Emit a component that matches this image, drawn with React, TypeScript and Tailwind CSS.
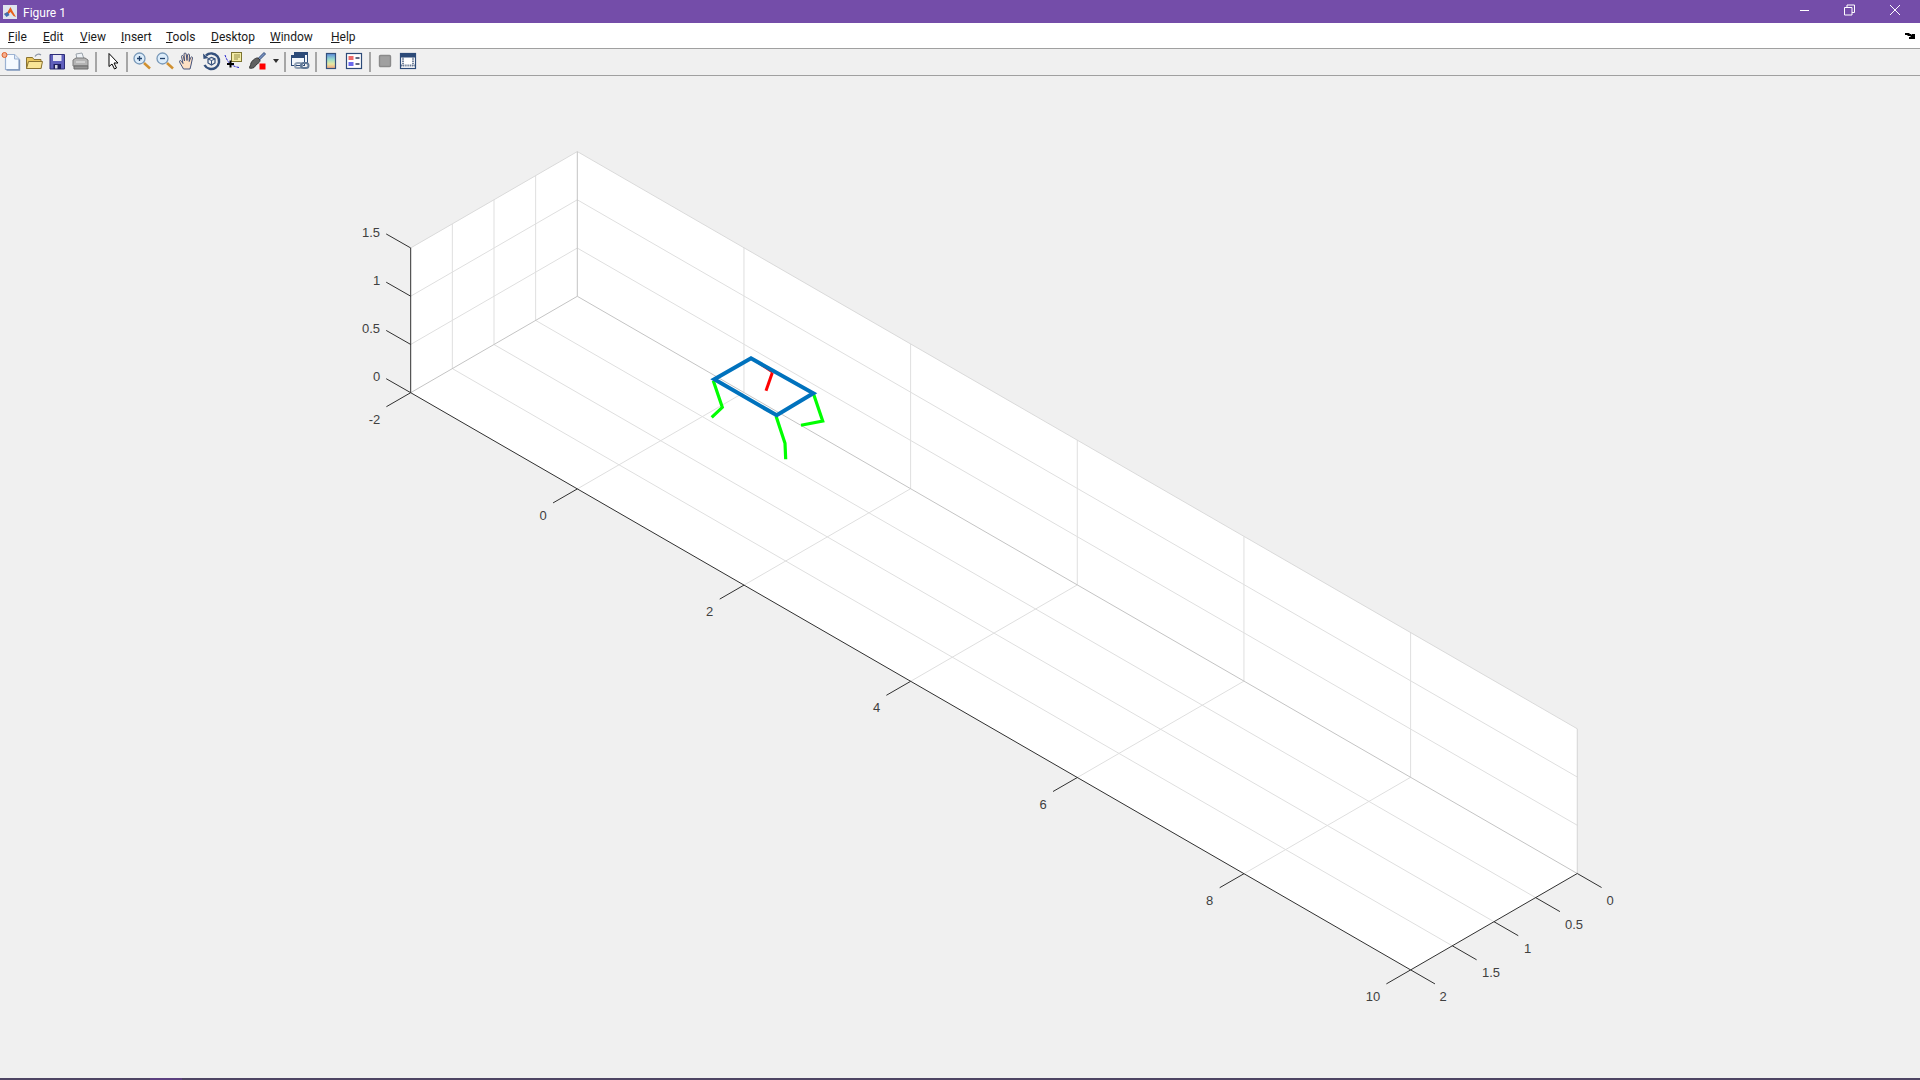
import React from "react";

const P = (x: number, y: number, z: number): [number, number] => [
  410.7 + 83.33 * (x + 2) + 83.3 * (2 - y),
  392.7 + 48.1 * (x + 2) - 48.2 * (2 - y) - 96.5 * z,
];
const seg = (a: [number, number], b: [number, number], color: string, w = 1, key?: string) => (
  <line key={key} x1={a[0]} y1={a[1]} x2={b[0]} y2={b[1]} stroke={color} strokeWidth={w} />
);
const pts = (...p: [number, number][]) => p.map((q) => q.join(",")).join(" ");

const GRID = "#dfdfdf";
const EDGE = "#c4c4c4";
const AXIS = "#303030";
const LABEL = "#404040";

const labels: [string, number, number][] = [
  ["1.5", 371, 237], ["1", 376.5, 285], ["0.5", 371, 333], ["0", 376.5, 381], ["-2", 374.5, 424],
  ["0", 543, 520], ["2", 709.5, 616], ["4", 876.5, 712], ["6", 1043, 809], ["8", 1209.5, 905],
  ["10", 1373, 1001],
  ["2", 1443, 1001], ["1.5", 1491, 977], ["1", 1527.5, 953], ["0.5", 1574, 929], ["0", 1610, 905],
];

function Plot() {
  const xs = [0, 2, 4, 6, 8];
  const ys = [0.5, 1, 1.5];
  const zs = [0.5, 1];
  return (
    <svg className="block w-full h-full" viewBox="0 76 1920 1002">
      <polygon fill="#ffffff" points={pts(P(-2, 2, 0), P(10, 2, 0), P(10, 0, 0), P(10, 0, 1.5), P(-2, 0, 1.5), P(-2, 2, 1.5))} />
      {xs.map((x) => seg(P(x, 2, 0), P(x, 0, 0), GRID, 1, `fx${x}`))}
      {ys.map((y) => seg(P(-2, y, 0), P(10, y, 0), GRID, 1, `fy${y}`))}
      {xs.map((x) => seg(P(x, 0, 0), P(x, 0, 1.5), GRID, 1, `wx${x}`))}
      {zs.map((z) => seg(P(-2, 0, z), P(10, 0, z), GRID, 1, `wz${z}`))}
      {ys.map((y) => seg(P(-2, y, 0), P(-2, y, 1.5), GRID, 1, `ly${y}`))}
      {zs.map((z) => seg(P(-2, 2, z), P(-2, 0, z), GRID, 1, `lz${z}`))}
      {seg(P(-2, 2, 1.5), P(-2, 0, 1.5), "#dadada")}
      {seg(P(-2, 0, 1.5), P(10, 0, 1.5), "#dadada")}
      {seg(P(10, 0, 1.5), P(10, 0, 0), "#d4d4d4")}
      {seg(P(-2, 0, 1.5), P(-2, 0, 0), EDGE)}
      {seg(P(-2, 2, 0), P(-2, 0, 0), EDGE)}
      {seg(P(-2, 0, 0), P(10, 0, 0), EDGE)}

      <polyline points="751,358.3 772.3,372.7" fill="none" stroke="#ff0000" strokeWidth="1.6" />
      <polyline points="772.3,372.7 766,390.7" fill="none" stroke="#ff0000" strokeWidth="3" />
      <polyline points="713.3,380.7 722.3,407.3 711.7,417.3" fill="none" stroke="#00ff00" strokeWidth="3.2" />
      <polyline points="813.3,393.3 822.7,421 801,425.3" fill="none" stroke="#00ff00" strokeWidth="3.2" />
      <polyline points="776,416 785,443.3 785.7,459.3" fill="none" stroke="#00ff00" strokeWidth="3.2" />
      <polygon points="714.3,379.3 751,358.3 813.3,393.3 776.7,415.3" fill="none" stroke="#0072bd" strokeWidth="4" />

      {seg(P(-2, 2, 0), P(10, 2, 0), AXIS)}
      {seg(P(10, 2, 0), P(10, 0, 0), AXIS)}
      {seg(P(-2, 2, 0), P(-2, 2, 1.5), AXIS)}
      {[0, 0.5, 1, 1.5].map((z) => {
        const a = P(-2, 2, z);
        return seg(a, [a[0] - 24.5, a[1] - 14], AXIS, 1, `tz${z}`);
      })}
      {[-2, 0, 2, 4, 6, 8, 10].map((x) => {
        const a = P(x, 2, 0);
        return seg(a, [a[0] - 24.3, a[1] + 14], AXIS, 1, `tx${x}`);
      })}
      {[0, 0.5, 1, 1.5, 2].map((y) => {
        const a = P(10, y, 0);
        return seg(a, [a[0] + 24.3, a[1] + 14], AXIS, 1, `ty${y}`);
      })}
      {labels.map(([t, x, y], i) => (
        <text key={i} x={x} y={y} textAnchor="middle" fontSize="13" fill={LABEL} fontFamily="'Liberation Sans', sans-serif">
          {t}
        </text>
      ))}
    </svg>
  );
}

const I = ({ children }: { children: React.ReactNode }) => (
  <div className="w-[23px] h-[26px] flex items-center justify-center shrink-0">
    <svg className="-translate-x-px -translate-y-px" width="20" height="20" viewBox="0 0 20 20" fill="none">{children}</svg>
  </div>
);

const Icons = {
  New: (
    <I>
      <path d="M4.500 3.500h9l4.500 4.500v10.500h-13.500z" fill="#f6faff" stroke="#9cb2d2" strokeWidth="1.200" />
      <path d="M13.500 3.500v4.500h4.500" fill="#dfe9f6" stroke="#9cb2d2" />
      <path d="M18.500 8.500v10.500h-13" stroke="#7f96ba" strokeWidth="1.400" />
      <circle cx="3.500" cy="4" r="2.500" fill="#f4b090" stroke="#e0602a" />
    </I>
  ),
  Open: (
    <I>
      <path d="M2.500 6.500h6l1.500 2h7v9h-14.500z" fill="#e9c65e" stroke="#8a7230" />
      <path d="M2.500 17.500l2-7h14l-1.500 7z" fill="#f9e596" stroke="#8a7230" />
      <path d="M11 5.500c1.500-2.500 4-3 6-1.500" stroke="#8a94a6" strokeWidth="1.200" />
    </I>
  ),
  Save: (
    <I>
      <path d="M3 3.500h14.500v14.500h-14.500z" fill="#5f5fbc" stroke="#2e2e78" />
      <rect x="6" y="4" width="8.500" height="6" fill="#e8e8f4" />
      <rect x="6.500" y="13" width="7.500" height="5" fill="#1c1c5c" />
      <rect x="8" y="14" width="2.500" height="3.500" fill="#d8d8e8" />
    </I>
  ),
  Print: (
    <I>
      <path d="M6 3l6-1 2 6H7z" fill="#eef2f6" stroke="#9aa2aa" />
      <path d="M3 9l3-2h9l3 2v6H3z" fill="#b4b4b4" stroke="#7a7a7a" />
      <path d="M4 15h14v3H4z" fill="#969696" stroke="#6a6a6a" />
      <path d="M6 11h9" stroke="#ececec" />
    </I>
  ),
  Arrow: (
    <I>
      <path d="M6 2.500v13l3-2.500 2.500 5 2-1-2.500-5h4z" fill="#ffffff" stroke="#000000" strokeWidth="1" />
    </I>
  ),
  ZoomIn: (
    <I>
      <circle cx="7.500" cy="7.500" r="5.500" fill="#dcecfa" stroke="#7898b8" strokeWidth="1.300" />
      <path d="M5 7.500h5M7.500 5v5" stroke="#20406a" strokeWidth="1.300" />
      <path d="M12 12l6 5.500" stroke="#d09030" strokeWidth="2.500" />
    </I>
  ),
  ZoomOut: (
    <I>
      <circle cx="7.500" cy="7.500" r="5.500" fill="#dcecfa" stroke="#7898b8" strokeWidth="1.300" />
      <path d="M5 7.500h5" stroke="#20406a" strokeWidth="1.300" />
      <path d="M12 12l6 5.500" stroke="#d09030" strokeWidth="2.500" />
    </I>
  ),
  Pan: (
    <I>
      <path d="M5.500 18c-1.500-3-3.500-5.500-4-7.500 0-1.500 1.500-1 2.500.5l1 1.500-1.500-7c0-1.300 1.500-1.300 2 0l1 4.500-.5-7c0-1.300 2-1.300 2.200 0l.8 6.500.5-5.500c.2-1.300 2-1.300 2 0l-.3 6.500 1.500-4c.5-1 2-.7 1.800.5l-1.500 7-1 4z" fill="#fde0c4" stroke="#44527a" strokeWidth="1" />
    </I>
  ),
  Rotate: (
    <I>
      <path d="M5 4.500a7.800 7.800 0 1 1-1.500 9.500" stroke="#34507c" strokeWidth="2.400" />
      <path d="M2 2.500l.5 5.500 5-1z" fill="#34507c" />
      <path d="M7 8l3.500-1.500 3.500 1.500v4l-3.500 2-3.500-2z" stroke="#34507c" strokeWidth="1.200" />
      <path d="M7 8l3.500 1.500 3.500-1.500M10.500 9.500v4" stroke="#34507c" strokeWidth="1" />
    </I>
  ),
  Data: (
    <I>
      <path d="M1 4c2 6 5 11 14 12.500" stroke="#2020d0" strokeWidth="1" strokeDasharray="2.500 1" />
      <rect x="7.500" y="1.500" width="10" height="9" fill="#f4eda6" stroke="#7c7430" />
      <path d="M10 4h6M10 6h6M10 8h4" stroke="#7c7430" strokeWidth=".8" />
      <path d="M3 13h7M6.500 9.500v7" stroke="#000000" strokeWidth="2" />
    </I>
  ),
  Brush: (
    <I>
      <path d="M11 7.500l6-6 1.500 1.500-6 6z" fill="#7890c0" stroke="#34507c" />
      <path d="M4 12c1.500-3 5-5.500 7-5l2 2c.3 2-2 3.500-3 4l-3 3.500c-2 1-4.500 1-5 0 1-.5 1.500-2 2-4.500z" fill="#606060" stroke="#383838" />
      <rect x="12.500" y="12.500" width="6" height="6" fill="#ff0000" />
    </I>
  ),
  Link: (
    <I>
      <rect x="4.500" y="1.500" width="13" height="10" fill="#f4f8fc" stroke="#2c4a78" />
      <path d="M4.500 3h13" stroke="#2c4a78" strokeWidth="2" />
      <rect x="1.500" y="4.500" width="13" height="10" fill="#f4f8fc" stroke="#2c4a78" />
      <path d="M1.500 6h13" stroke="#2c4a78" strokeWidth="2" />
      <rect x="5" y="12" width="7" height="5" rx="2.500" fill="none" stroke="#90a0b4" strokeWidth="2" />
      <rect x="11" y="12" width="7.500" height="5" rx="2.500" fill="none" stroke="#607896" strokeWidth="2" />
    </I>
  ),
  Colorbar: (
    <I>
      <defs>
        <linearGradient id="cb" x1="0" y1="0" x2="0" y2="1">
          <stop offset="0" stopColor="#5a8adc" />
          <stop offset=".4" stopColor="#9adccc" />
          <stop offset=".7" stopColor="#e8e8a0" />
          <stop offset="1" stopColor="#f0a080" />
        </linearGradient>
      </defs>
      <rect x="5.500" y="2.500" width="9" height="15" fill="url(#cb)" stroke="#34507c" strokeWidth="1.200" />
    </I>
  ),
  Legend: (
    <I>
      <rect x="2.500" y="2.500" width="15" height="15" fill="#ffffff" stroke="#2c4a78" strokeWidth="1.200" />
      <rect x="4.500" y="5" width="5" height="4" fill="#ee6a6a" />
      <rect x="4.500" y="11" width="5" height="4" fill="#6a6aee" />
      <path d="M11.500 7h4M11.500 13h4" stroke="#2c3a58" strokeWidth="1.300" />
    </I>
  ),
  Gray: (
    <I>
      <rect x="4.500" y="4.500" width="11" height="11" rx="1" fill="#a0a0a0" stroke="#8a8a8a" strokeWidth="1.400" />
    </I>
  ),
  Dock: (
    <I>
      <rect x="2.500" y="2.500" width="15" height="15" fill="#ffffff" stroke="#2c4a78" strokeWidth="1.200" />
      <rect x="3" y="3" width="14" height="3.500" fill="#2c4a78" />
      <path d="M3 14.500h14M5 6.500v8M15 6.500v8" stroke="#6a7a94" strokeWidth="1.800" strokeDasharray="1.200 .6" />
    </I>
  ),
};

const Sep = ({ className }: { className: string }) => <div className={`w-[2px] h-[20px] bg-[#a6a6a6] shrink-0 ${className}`} />;

const menus: [string, string, number][] = [
  ["F", "ile", 35], ["E", "dit", 37], ["V", "iew", 41], ["I", "nsert", 45],
  ["T", "ools", 45], ["D", "esktop", 59], ["W", "indow", 61], ["H", "elp", 40],
];

export default function App() {
  return (
    <div className="w-[1920px] h-[1080px] flex flex-col overflow-hidden bg-[#f0f0f0] font-['Roboto',sans-serif]">
      <div className="h-[23px] shrink-0 bg-[#744da9] flex items-center text-white text-[12px]">
        <div className="w-[23px] flex pl-[3px]">
          <svg width="14" height="14" viewBox="0 0 14 14">
            <rect width="14" height="14" fill="#dfe4ee" />
            <path d="M1 9l3.500-2 3-5 2 4 3.500 6-2.500-1-3-4-3 3z" fill="#e8601c" />
            <path d="M1 9l3.500-2 2 3-3 2z" fill="#3f6fb0" />
          </svg>
        </div>
        <span className="pt-[2px]">Figure 1</span>
        <div className="ml-auto flex items-center">
          <svg width="120" height="23" viewBox="1800 0 120 23" fill="none" stroke="#ffffff">
            <path d="M1799 10.500h10" />
            <path d="M1844.500 7.500h7.500v7.500h-7.500zM1847 7.500v-2.500h7.500v7.500h-2.500" />
            <path d="M1890 5l10 10M1900 5l-10 10" />
          </svg>
        </div>
      </div>
      <div className="h-[25px] shrink-0 bg-white flex items-center pl-[8px] text-[12px] text-[#1a1a1a]">
        {menus.map(([a, b, w]) => (
          <div key={a} className="shrink-0 pt-[2px]" style={{ width: w }}>
            <span className="underline">{a}</span>
            {b}
          </div>
        ))}
        <div className="ml-auto pr-[5px]">
          <svg width="10" height="6" viewBox="0 0 10 6" className="block">
            <path d="M0 0h4l1 1h1l1 1v-1h3v5h-6v-2h2l-1-1h-2l-1-1h-2z" fill="#000000" />
          </svg>
        </div>
      </div>
      <div className="h-[28px] shrink-0 border-y border-[#a0a0a0] bg-[#f0f0f0] flex items-center">
        {Icons.New}{Icons.Open}{Icons.Save}{Icons.Print}
        <Sep className="ml-[3px] mr-[5px]" />
        {Icons.Arrow}
        <Sep className="ml-[1px] mr-[3px]" />
        {Icons.ZoomIn}{Icons.ZoomOut}{Icons.Pan}{Icons.Rotate}{Icons.Data}{Icons.Brush}
        <div className="w-[14px] flex justify-center shrink-0 -translate-y-px">
          <div className="w-0 h-0 border-x-[3.5px] border-x-transparent border-t-[4px] border-t-[#303030]" />
        </div>
        <Sep className="ml-[1px] mr-[3px]" />
        {Icons.Link}
        <Sep className="ml-[3px] mr-[3px]" />
        {Icons.Colorbar}{Icons.Legend}
        <Sep className="ml-[3px] mr-[3px]" />
        {Icons.Gray}{Icons.Dock}
      </div>
      <div className="flex-1 min-h-0">
        <Plot />
      </div>
      <div className="h-[2px] shrink-0 bg-[#4e4563] flex">
        <div className="ml-[150px] w-[32px] bg-[#5c4080]" />
      </div>
    </div>
  );
}
